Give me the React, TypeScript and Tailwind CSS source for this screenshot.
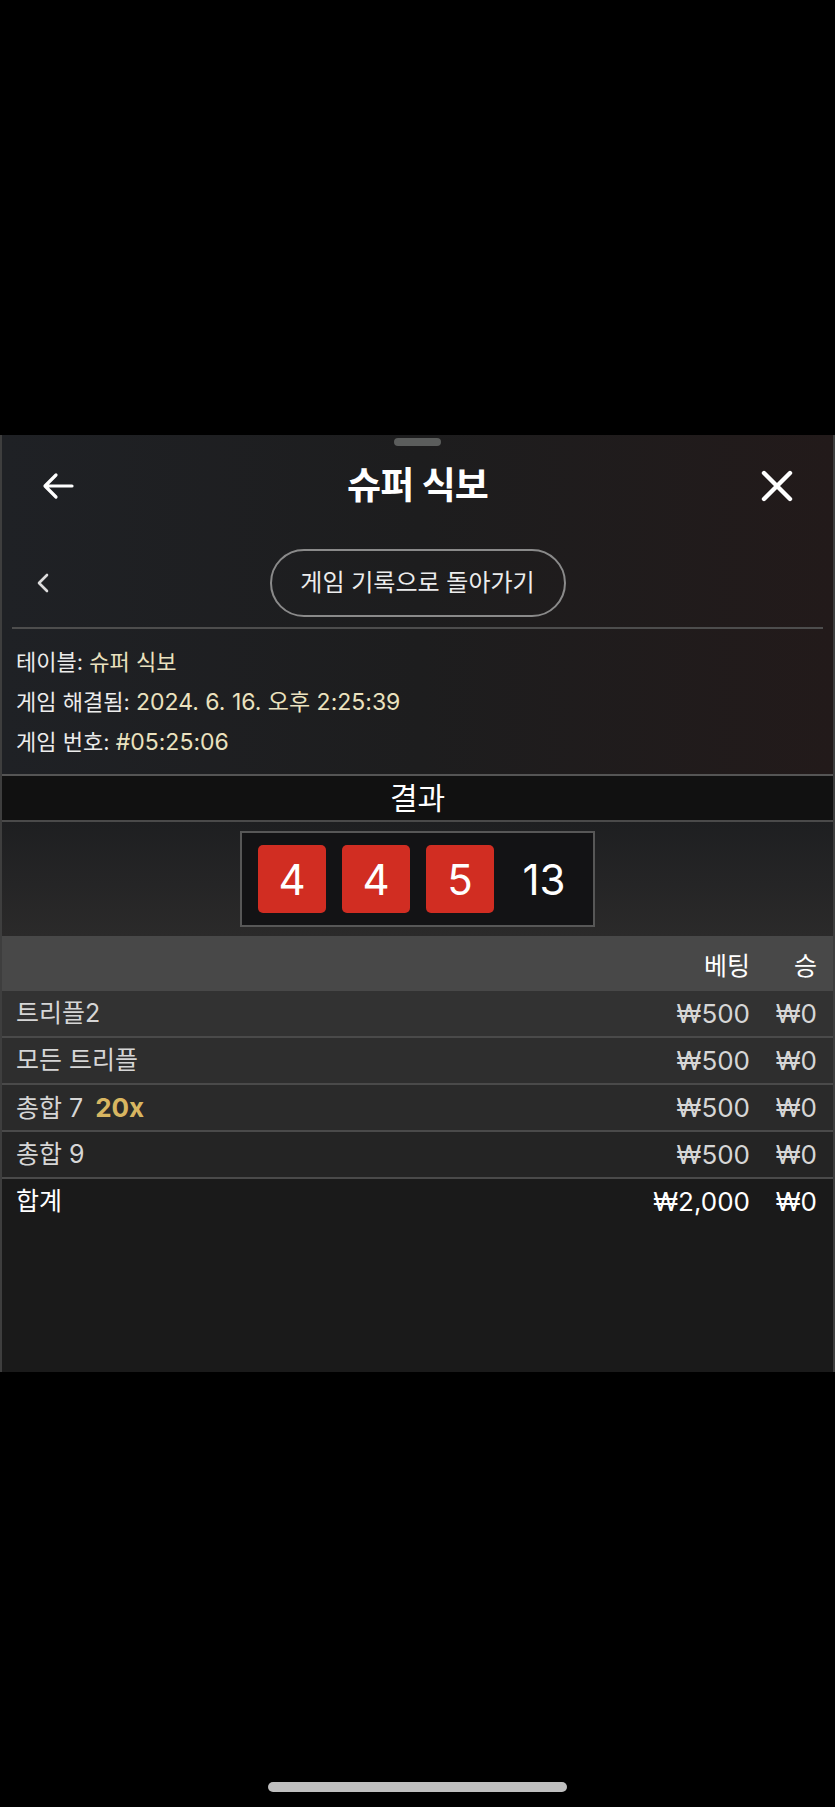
const FONT = { fontFamily: 'Inter, "Noto Sans CJK KR", "Noto Sans", sans-serif' };

const BETS = [
  { name: "트리플2", bet: "₩500", win: "₩0", bg: "bg-[#323232]" },
  { name: "모든 트리플", bet: "₩500", win: "₩0", bg: "bg-[#2e2e2e]" },
  { name: "총합 7", odds: "20x", bet: "₩500", win: "₩0", bg: "bg-[#2a2a2a]" },
  { name: "총합 9", bet: "₩500", win: "₩0", bg: "bg-[#242424]" },
];

const DICE = [4, 4, 5];

function ArrowLeft() {
  return (
    <svg width="32" height="28" viewBox="0 0 32 28" fill="none">
      <path d="M30 14H4M14 3L3 14l11 11" stroke="white" strokeWidth="3.2" strokeLinecap="round" strokeLinejoin="round" />
    </svg>
  );
}

function Close() {
  return (
    <svg width="32" height="32" viewBox="0 0 32 32" fill="none">
      <path d="M3 3l26 26M29 3L3 29" stroke="white" strokeWidth="4.4" strokeLinecap="round" />
    </svg>
  );
}

function Chevron() {
  return (
    <svg width="14" height="20" viewBox="0 0 14 20" fill="none">
      <path d="M11 2L3 10l8 8" stroke="#dcdcdc" strokeWidth="2.6" strokeLinecap="round" strokeLinejoin="round" />
    </svg>
  );
}

export default function App() {
  return (
    <div className="min-h-screen bg-black flex flex-col" style={FONT}>
      <div className="h-[435px] shrink-0" />

      {/* sheet */}
      <div className="h-[937px] shrink-0 border-x-2 border-[#3e3e3e] bg-[#1a1a1a] flex flex-col overflow-hidden">
        <div className="bg-linear-to-r from-[#1f2125] via-[#1d1d1e] to-[#221a1a]">
          <div className="pt-[3px] flex justify-center">
            <div className="w-[47px] h-[8px] rounded-full bg-[#5b5d5c]" />
          </div>

          {/* header */}
          <div className="h-[80px] flex items-center justify-between px-[40px]">
            <ArrowLeft />
            <h1 className="text-[37px] font-semibold text-white tracking-tight">슈퍼 식보</h1>
            <Close />
          </div>

          {/* back row */}
          <div className="grid grid-cols-[1fr_auto_1fr] items-center pt-[23px] pb-[10px]">
            <div className="pl-[34px]">
              <Chevron />
            </div>
            <button className="h-[68px] w-[296px] rounded-full border-2 border-[#8a8a8a] text-[24px] text-[#ececec]">
              게임 기록으로 돌아가기
            </button>
            <div />
          </div>

          <div className="mx-[10px] h-[2px] bg-[#4d4d4d]" />

          {/* info */}
          <div className="px-[14px] pt-[13px] pb-[12px] text-[22px] leading-[40px] text-[#ececec] border-b-2 border-[#555]">
            <div>
              테이블: <span className="text-[#ebe2bf]">슈퍼 식보</span>
            </div>
            <div>
              게임 해결됨: <span className="text-[23px] text-[#ebe2bf]">2024. 6. 16. 오후 2:25:39</span>
            </div>
            <div>
              게임 번호: <span className="text-[23px] text-[#ebe2bf]">#05:25:06</span>
            </div>
          </div>
        </div>

        {/* result title */}
        <div className="h-[46px] shrink-0 flex items-center justify-center bg-[#111111] border-b-2 border-[#4a4a4a] text-[30px] text-white">
          결과
        </div>

        {/* dice */}
        <div className="h-[114px] shrink-0 flex items-center justify-center bg-linear-to-b from-[#1e1f21] to-[#2b2a2a]">
          <div className="flex items-center gap-[16px] pl-[16px] pr-[15px] h-[96px] border-2 border-[#575757] bg-[#131315]">
            {DICE.map((d, i) => (
              <div
                key={i}
                className="w-[68px] h-[68px] rounded-[5px] bg-[#d12d22] flex items-center justify-center text-[42px] text-white"
              >
                {d}
              </div>
            ))}
            <div className="w-[68px] text-center text-[42px] text-white">13</div>
          </div>
        </div>

        {/* table header */}
        <div className="h-[55px] shrink-0 flex items-center pt-[6px] pr-[16px] bg-[#484848] text-[25px] text-white">
          <div className="flex-1" />
          <div className="text-right">베팅</div>
          <div className="w-[67px] text-right">승</div>
        </div>

        {BETS.map((b) => (
          <div
            key={b.name}
            className={`h-[47px] shrink-0 flex items-center pl-[14px] pr-[16px] border-b-2 border-[#4a4a4a] text-[25px] text-[#d6d6d6] ${b.bg}`}
          >
            <div className="flex-1">
              {b.name}
              {b.odds && <span className="ml-[12px] text-[26px] font-bold text-[#d8b661]">{b.odds}</span>}
            </div>
            <div className="text-right text-[26px]">{b.bet}</div>
            <div className="w-[67px] text-right text-[26px]">{b.win}</div>
          </div>
        ))}

        <div className="h-[45px] shrink-0 flex items-center pl-[14px] pr-[16px] text-[25px] text-white">
          <div className="flex-1">합계</div>
          <div className="text-right text-[26px]">₩2,000</div>
          <div className="w-[67px] text-right text-[26px]">₩0</div>
        </div>
        <div className="flex-1" />
      </div>

      <div className="flex-1 flex items-end justify-center pb-[15px]">
        <div className="w-[299px] h-[10px] rounded-full bg-[#bfbfbf]" />
      </div>
    </div>
  );
}
